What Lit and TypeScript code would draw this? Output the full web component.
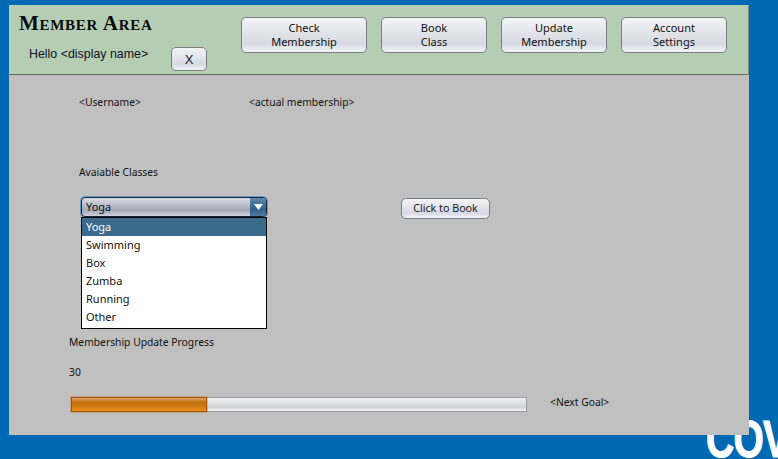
import { css, html, LitElement } from "lit";
import { customElement, property } from "lit/decorators.js";

const NAV = [
  ["Check", "Membership", 126],
  ["Book", "Class", 106],
  ["Update", "Membership", 106],
  ["Account", "Settings", 106],
] as const;

const CLASSES = ["Yoga", "Swimming", "Box", "Zumba", "Running", "Other"];

@customElement("app-root")
export class AppRoot extends LitElement {
  static override styles = css`
    :host {
      display: block;
      position: relative;
      width: 778px;
      height: 459px;
      overflow: hidden;
      background: #0069b4;
      font-family: "Noto Sans", Tahoma, sans-serif;
      font-size: 10.3px;
      color: #111;
    }

    .logo {
      position: absolute;
      left: 706px;
      top: 415px;
      font-family: "Liberation Sans", Arial, sans-serif;
      font-weight: 700;
      font-size: 52px;
      line-height: 48px;
      letter-spacing: -1px;
      color: #fff;
      -webkit-text-stroke: 1px #fff;
      transform: scaleX(0.75);
      transform-origin: left top;
    }

    .panel {
      position: absolute;
      left: 9px;
      top: 5px;
      width: 740px;
      height: 430px;
      background: #c0c0c0;
    }

    /* шапка */
    .header {
      display: flex;
      height: 70px;
      box-sizing: border-box;
      background: #b5ceb3;
      border-bottom: 1px solid #5f6b5f;
      border-right: 1px solid #7d8a7d;
    }

    .brand {
      width: 232px;
      box-sizing: border-box;
      padding: 7px 0 0 10px;
    }

    .title {
      font-family: "Liberation Serif", "Times New Roman", serif;
      font-weight: 700;
      font-variant: small-caps;
      font-size: 21px;
      line-height: 22px;
      letter-spacing: 0.7px;
      color: #0a0a0a;
    }

    .hello-row {
      display: flex;
      margin-top: 10px;
    }

    .hello {
      width: 152px;
      padding: 3px 0 0 10px;
      box-sizing: border-box;
      font-family: "Liberation Sans", Arial, sans-serif;
      font-size: 12.4px;
      line-height: 15px;
      color: #14102a;
    }

    .nav {
      display: flex;
      gap: 14px;
      padding-top: 12px;
    }

    button {
      box-sizing: border-box;
      padding: 0;
      border: 1px solid #7b7f85;
      border-radius: 5px;
      font: inherit;
      color: #111;
      background: linear-gradient(#f3f4f6 0%, #e2e4ea 45%, #d6d9e2 75%, #f4f5f8 100%);
    }

    .nav button {
      height: 36px;
      font-size: 11px;
      line-height: 14px;
    }

    .close {
      width: 36px;
      height: 24px;
      margin-top: 3px;
      padding-top: 1px;
      font-family: "Liberation Sans", Arial, sans-serif;
      font-size: 13px;
      color: #223;
    }

    /* основна частина */
    .body {
      padding: 20px 0 0 60px;
    }

    .labels {
      display: flex;
      line-height: 14px;
      padding-left: 10px;
    }

    .labels span:first-child {
      width: 170px;
    }

    .classes {
      margin: 56px 0 0 10px;
      line-height: 14px;
    }

    .booking {
      display: flex;
      align-items: flex-start;
      margin: 18px 0 0 12px;
    }

    .combo {
      width: 186px;
    }

    .select {
      display: flex;
      height: 20px;
      box-sizing: border-box;
      border: 1px solid #10243a;
      border-radius: 4px;
      box-shadow: 0 0 0 1px #6b9ac8;
      overflow: hidden;
      font-size: 11px;
      line-height: 18px;
      background: linear-gradient(#d8dae2 0%, #aeb2bf 55%, #a4a9b6 70%, #d0d3dc 100%);
    }

    .select .value {
      flex: 1;
      padding-left: 4px;
    }

    .arrow {
      width: 16px;
      display: flex;
      align-items: center;
      justify-content: center;
      background: linear-gradient(#5d86ab, #33628c 60%, #4f7aa2);
    }

    .list {
      border: 1px solid #000;
      background: #fff;
      font-size: 11px;
      padding-bottom: 2px;
    }

    .list div {
      height: 18px;
      line-height: 18px;
      padding-left: 4px;
    }

    .list .selected {
      background: #3a6a8c;
      color: #fff;
    }

    .book {
      width: 89px;
      height: 21px;
      margin: 1px 0 0 134px;
      padding-bottom: 1px;
      font-size: 10.7px;
      color: #1a1a22;
    }

    .progress-label {
      margin-top: 6px;
      line-height: 14px;
    }

    .count {
      margin-top: 16px;
      line-height: 14px;
    }

    .progress-row {
      display: flex;
      align-items: flex-start;
      margin: 18px 0 0 2px;
    }

    .track {
      width: 456px;
      height: 15px;
      box-sizing: border-box;
      border: 1px solid #9a9a9e;
      background: linear-gradient(#f2f2f4 0%, #dcdde2 45%, #cfd0d6 70%, #f4f4f6 100%);
    }

    .fill {
      height: 15px;
      box-sizing: border-box;
      margin: -1px 0 0 -1px;
      border: 1px solid #a2520a;
      box-shadow: 0 0 0 1px rgba(190, 110, 30, 0.35);
      background: linear-gradient(#e0a56c 0%, #c4720f 30%, #c9760f 60%, #ec8f1e 100%);
    }

    .goal {
      margin: -2px 0 0 23px;
      line-height: 14px;
    }
  `;

  @property({ type: Number }) progress = 30;

  override render() {
    return html`
      <div class="logo">COV</div>
      <div class="panel">
        <div class="header">
          <div class="brand">
            <div class="title">Member Area</div>
            <div class="hello-row">
              <div class="hello">Hello &lt;display name&gt;</div>
              <button class="close">X</button>
            </div>
          </div>
          <div class="nav">
            ${NAV.map(
              ([a, b, w]) =>
                html`<button style="width:${w}px">${a}<br />${b}</button>`
            )}
          </div>
        </div>
        <div class="body">
          <div class="labels">
            <span>&lt;Username&gt;</span><span>&lt;actual membership&gt;</span>
          </div>
          <div class="classes">Avaiable Classes</div>
          <div class="booking">
            <div class="combo">
              <div class="select">
                <span class="value">Yoga</span>
                <span class="arrow">
                  <svg width="9" height="6" viewBox="0 0 9 6"><path d="M0 0h9L4.5 6z" fill="#fff" /></svg>
                </span>
              </div>
              <div class="list">
                ${CLASSES.map(
                  (c, i) => html`<div class=${i === 0 ? "selected" : ""}>${c}</div>`
                )}
              </div>
            </div>
            <button class="book">Click to Book</button>
          </div>
          <div class="progress-label">Membership Update Progress</div>
          <div class="count">${this.progress}</div>
          <div class="progress-row">
            <div class="track">
              <div class="fill" style="width:${this.progress}%"></div>
            </div>
            <span class="goal">&lt;Next Goal&gt;</span>
          </div>
        </div>
      </div>
    `;
  }
}
